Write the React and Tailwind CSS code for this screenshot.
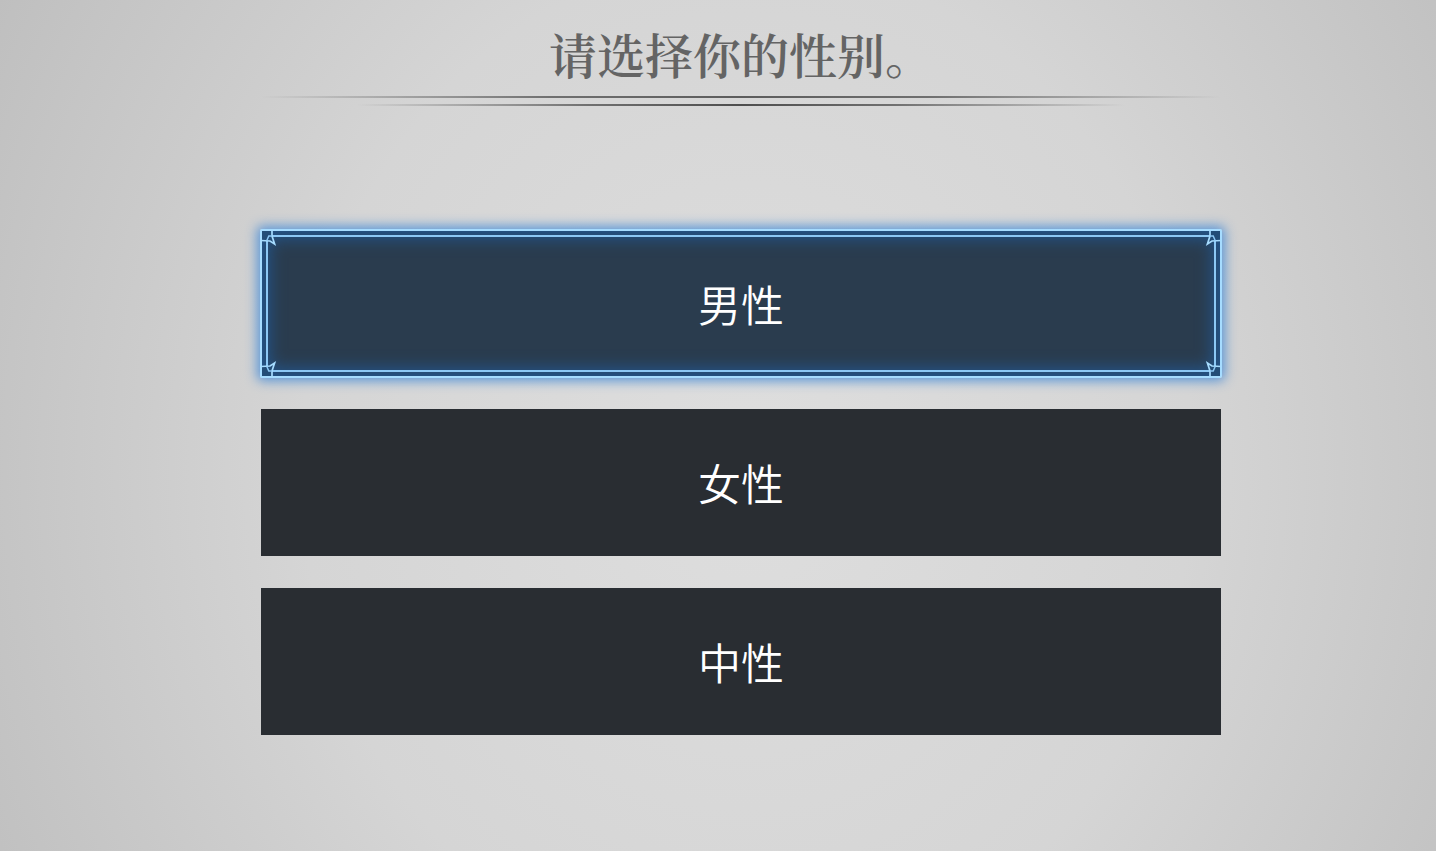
import React, { useState } from 'react';
import clsx from 'clsx';

const options = [
  { id: 'male', label: '男性' },
  { id: 'female', label: '女性' },
  { id: 'neutral', label: '中性' },
];

const Corner = ({ className }) => (
  <svg viewBox="0 0 18 18" fill="none" className={clsx('absolute w-[18px] h-[18px]', className)} aria-hidden="true">
    <path d="M2 2H12V11.5H2Z" fill="#234d77" />
    <path d="M12 1V7L14.6 15L10 12L1 11.5" stroke="#a6dcff" strokeWidth="1.7" />
    <path d="M6.8 11.5L8.8 7L12 7" stroke="#8cc8f5" strokeWidth="1.5" />
  </svg>
);

const SelectedFrame = () => (
  <span className="absolute -inset-px border-2 border-[#a6dcff] rounded-xs shadow-[0_0_12px_3px_#5b96d6,inset_0_0_16px_8px_#235489]">
    <span className="absolute inset-1 border-2 border-[#8cc8f5]" />
    <Corner className="-top-0.5 -left-0.5" />
    <Corner className="-top-0.5 -right-0.5 -scale-x-100" />
    <Corner className="-bottom-0.5 -left-0.5 -scale-y-100" />
    <Corner className="-bottom-0.5 -right-0.5 -scale-100" />
  </span>
);

const OptionButton = ({ label, selected, onClick }) => (
  <button
    type="button"
    aria-pressed={selected}
    onClick={onClick}
    className={clsx(
      'relative w-full h-[147px] flex items-center justify-center text-white text-[43px] leading-none font-[350] outline-none cursor-pointer',
      selected ? 'bg-[#2a3c4e]' : 'bg-[#292d32]'
    )}
  >
    {selected && <SelectedFrame />}
    <span className="relative">{label}</span>
  </button>
);

const App = () => {
  const [selected, setSelected] = useState('male');

  return (
    <main className="min-h-screen pt-[26px] pb-12 pl-[46px] flex flex-col items-center bg-[radial-gradient(ellipse_62%_120%_at_52%_55%,#dedede_0%,#d5d5d5_50%,#bdbdbd_100%)] font-['Noto_Sans_CJK_SC',sans-serif]">
      <header className="w-full max-w-[960px] flex flex-col items-center">
        <h1 className="text-5xl leading-[56px] font-semibold text-[#646464] font-['Noto_Serif_CJK_SC','Noto_Sans_CJK_SC',serif]">
          请选择你的性别。
        </h1>
        <div className="mt-3.5 h-0.5 w-full bg-[linear-gradient(to_right,transparent,#707070_30%,#5c5c5c_50%,#707070_70%,transparent)]" />
        <div className="mt-1.5 h-0.5 w-4/5 bg-[linear-gradient(to_right,transparent,#707070_30%,#4e4e4e_50%,#707070_70%,transparent)]" />
      </header>

      <div className="mt-[124px] w-full max-w-[960px] flex flex-col gap-8">
        {options.map(o => (
          <OptionButton
            key={o.id}
            label={o.label}
            selected={selected === o.id}
            onClick={() => setSelected(o.id)}
          />
        ))}
      </div>
    </main>
  );
};

export default App;
